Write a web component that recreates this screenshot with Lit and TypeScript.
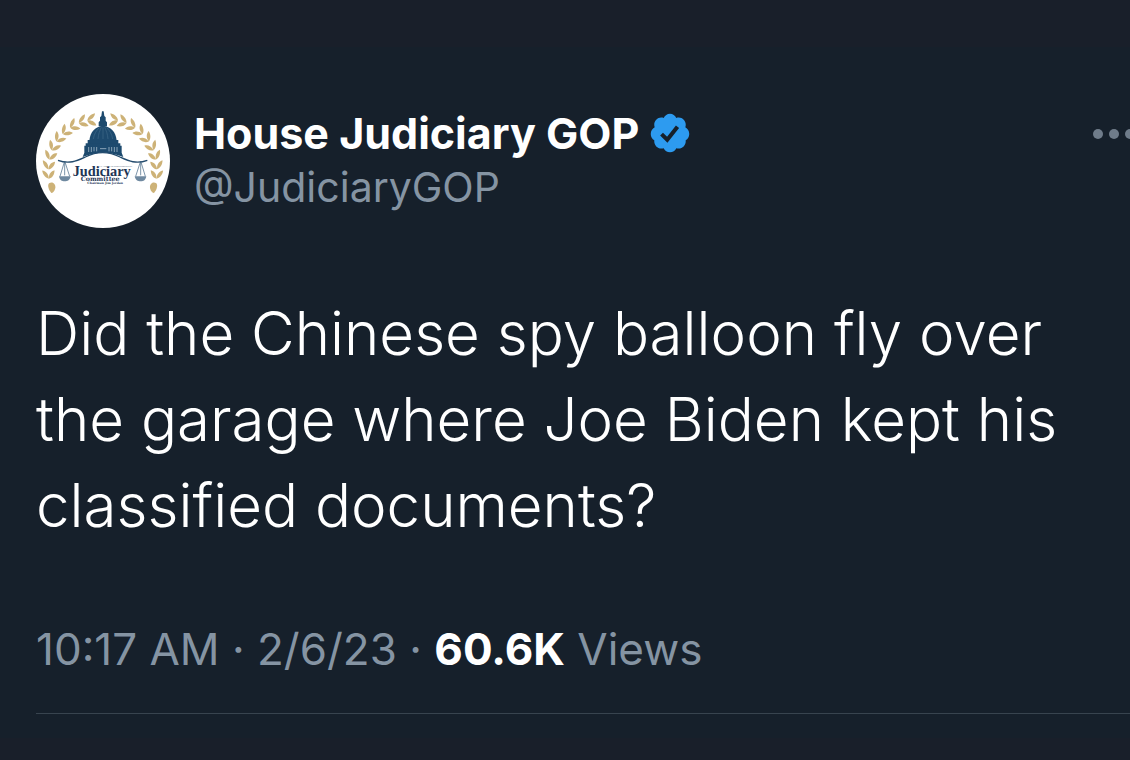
import { LitElement, html, css, svg } from "lit";
import { customElement } from "lit/decorators.js";

// [x, y, rotation] of each leaf pair on the left branch; the right one is mirrored.
const LEAVES: [number, number, number][] = [
  [184, 96, 84], [158, 101, 72], [131, 113, 60], [107, 130, 48], [87, 151, 38],
  [71, 176, 28], [61, 203, 16], [56, 232, 6], [56, 260, -2],
];

const branch = () => svg`
  ${LEAVES.map(([x, y, r]) => svg`
    <g transform="translate(${x} ${y}) rotate(${r})">
      <path d="M0 12C-9 10-18 0-19-13C-9-11 0-3 0 12Z"/>
      <path d="M0 12C0-3 8-11 18-13C18 0 10 10 0 12Z"/>
    </g>`)}
  <path d="M57 286C67 278 78 288 76 300C74 310 68 315 64 315C57 307 51 294 57 286Z"/>`;

const scale = () => svg`
  <path d="M104 219L90 265M104 219L119 265M104 219V262" fill="none" stroke="#3b5f7e" stroke-width="2"/>
  <path d="M87 265H122C120 276 113 280 104 280S89 276 87 265Z" fill="#6f89a0"/>`;

@customElement("account-avatar")
export class AccountAvatar extends LitElement {
  static styles = css`
    :host { display: block; width: 134px; height: 134px; flex: none; }
    svg { display: block; width: 100%; height: 100%; }
    .title { font-family: "Liberation Serif", serif; font-weight: 700; }
    .small { font-family: "DejaVu Serif", serif; font-weight: 700; }
  `;
  render() {
    return html`
      <svg viewBox="18 18 402 402" role="img" aria-label="House Judiciary GOP">
        <circle cx="219" cy="219" r="201" fill="#fff"/>
        <g fill="#cdb277">${branch()}</g>
        <g fill="#cdb277" transform="translate(436 0) scale(-1 1)">${branch()}</g>
        <g fill="#1d4a6e">
          <path d="M216 70H221L223 84L227 88V98L231 103V115H206V103L210 98V88L214 84Z"/>
          <path d="M178 158C180 132 196 115 219 113C242 115 258 132 260 158Z"/>
          <path d="M173 156H265V168H173Z"/>
          <path d="M167 166H271V173H275V194L280 207C262 201 246 194 219 194C192 194 176 201 158 207L163 194V173H167Z"/>
        </g>
        <path d="M190 153C192 138 200 126 208 119M204 153C205 138 210 126 214 118M219 153V118M234 153C233 138 228 126 224 118M248 153C246 138 238 126 230 119" fill="none" stroke="#3f6989" stroke-width="2"/>
        <path d="M176 177V192M184 177V192M192 177V190M200 177V190M237 177V190M245 177V190M253 177V192M261 177V192M210 182H229" fill="none" stroke="#8aa4b8" stroke-width="3"/>
        <path d="M84 217C118 230 142 218 166 207C186 197 202 194 218 194S250 197 270 207C294 218 318 230 352 217" fill="none" stroke="#234b6d" stroke-width="4"/>
        ${scale()}
        <g transform="translate(436 0) scale(-1 1)">${scale()}</g>
        <text fill="#1d3555">
          <tspan class="title" x="128" y="263" font-size="43">Judiciary</tspan>
          <tspan class="small" x="152" y="279" font-size="19">Committee</tspan>
          <tspan class="small" x="172" y="288" font-size="9">Chairman Jim Jordan</tspan>
          <tspan class="title" x="204" y="237" font-size="8" fill="#8a93a3">U.S. House of Representatives</tspan>
        </text>
      </svg>`;
  }
}

@customElement("app-root")
export class AppRoot extends LitElement {
  static styles = css`
    :host {
      display: block;
      min-height: 100vh;
      box-sizing: border-box;
      overflow: hidden;
      padding: 47px 0 22px;
      background: #191f2a;
      font-family: Inter, "Liberation Sans", sans-serif;
      color: #fff;
    }
    .post { background: #16202b; padding: 47px 0 24px 36px; }
    .head { display: flex; align-items: flex-start; }
    .who { flex: 1; min-width: 0; padding: 12px 0 0 24px; }
    .who a { display: block; color: inherit; text-decoration: none; }
    .name { display: flex; align-items: center; gap: 9px; font-size: 43px; line-height: 54px; font-weight: 700; }
    .handle { display: block; font-size: 41px; line-height: 54px; color: #8594a3; }
    .badge { width: 44px; height: 44px; }
    .more {
      flex: none; margin: 32px -8px 0 0; padding: 0; border: 0; background: none;
      width: 44px; height: 16px; color: #6f7c8a;
    }
    .more svg, .badge { display: block; overflow: visible; }
    .text { margin: 62px 36px 0 0; font-size: 60px; line-height: 86px; font-weight: 350; }
    .meta { margin: 74px 0 0; font-size: 44px; line-height: 54px; color: #8594a3; }
    .meta strong { color: #fff; font-weight: 700; }
    .rule { height: 1px; margin: 37px 0 0; border: 0; background: #38444f; }
  `;
  render() {
    return html`
      <article class="post">
        <header class="head">
          <account-avatar></account-avatar>
          <div class="who">
            <a href="#profile">
              <span class="name">House Judiciary GOP
                <svg class="badge" viewBox="0 0 24 24" role="img" aria-label="Verified account">
                  <path fill="#2d9bf0" d="M22.5 12.5c0-1.58-.875-2.95-2.148-3.6.154-.435.238-.905.238-1.4 0-2.21-1.71-3.998-3.818-3.998-.47 0-.92.084-1.336.25C14.818 2.415 13.51 1.5 12 1.5s-2.816.917-3.437 2.25c-.415-.165-.866-.25-1.336-.25-2.11 0-3.818 1.79-3.818 4 0 .494.083.964.237 1.4-1.272.65-2.147 2.018-2.147 3.6 0 1.495.782 2.798 1.942 3.486-.02.17-.032.34-.032.514 0 2.21 1.708 4 3.818 4 .47 0 .92-.086 1.335-.25.62 1.334 1.926 2.25 3.437 2.25 1.512 0 2.818-.916 3.437-2.25.415.163.865.248 1.336.248 2.11 0 3.818-1.79 3.818-4 0-.174-.012-.344-.033-.513 1.158-.687 1.943-1.99 1.943-3.484z"/>
                  <path fill="none" stroke="#16202b" stroke-width="2.2" d="M7.4 12.6l3.1 3.1L16.1 8.6"/>
                </svg>
              </span>
              <span class="handle">@JudiciaryGOP</span>
            </a>
          </div>
          <button class="more" aria-label="More">
            <svg width="44" height="16" viewBox="0 0 44 16" fill="currentColor">
              <circle cx="4" cy="8" r="5"/><circle cx="20" cy="8" r="5"/><circle cx="36" cy="8" r="5"/>
            </svg>
          </button>
        </header>
        <p class="text">Did the Chinese spy balloon fly over the garage where Joe Biden kept his classified documents?</p>
        <p class="meta"><time>10:17 AM · 2/6/23</time> · <strong>60.6K</strong> Views</p>
        <hr class="rule">
      </article>`;
  }
}
